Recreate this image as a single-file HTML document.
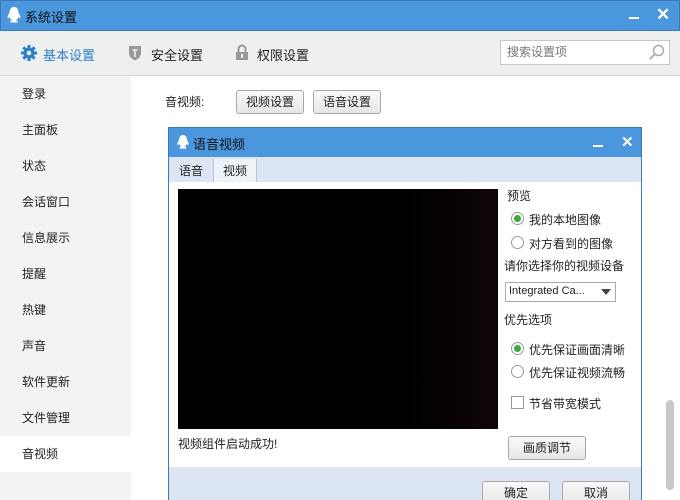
<!DOCTYPE html><html><head><meta charset="utf-8"><style>
*{margin:0;padding:0;box-sizing:border-box}
html,body{width:680px;height:500px;overflow:hidden}
body{font-family:"Liberation Sans","Noto Sans CJK SC",sans-serif;font-size:12px;color:#222;position:relative;background:#fff}
.a{position:absolute}
.btn{position:absolute;border:1px solid #a8a8a8;border-radius:3px;background:linear-gradient(#fafafa,#e6e6e6);text-align:center;font-size:12px}
.rad{position:absolute;width:13px;height:13px;border:1px solid #999;border-radius:50%;background:#fff}
.rad.on::after{content:"";position:absolute;left:2px;top:2px;width:7px;height:7px;border-radius:50%;background:#3daa3d}
</style></head><body>
<div class="a" style="left:0;top:0;width:680px;height:31px;background:#4b97dd;border:1px solid #3a78b8"></div>
<svg class="a" style="left:6px;top:6px" width="16" height="18" viewBox="0 0 16 18"><path d="M8 1C4.5 1 3.5 4 3.5 7 2 9 1 11 2 12.5 3 12 3.5 11.5 4 11c0 1.5 1 3 2 3.5C4 15 3 16 5 16.5h6c2-.5 1-1.5-1-2 1-.5 2-2 2-3.5.5.5 1 1 2 1.5 1-1.5 0-3.5-1.5-5.5C12.5 4 11.5 1 8 1z" fill="#fff"/></svg>
<div class="a" style="left:25px;top:7px;color:#111;font-size:13px">系统设置</div>
<div class="a" style="left:629px;top:17px;width:10px;height:2px;background:#fff"></div>
<div class="a" style="left:656px;top:5px;color:#fff;font-size:17px;font-weight:bold">✕</div>
<div class="a" style="left:0;top:31px;width:680px;height:45px;background:#eef0f0;border-bottom:1px solid #d8d8d8"></div>
<svg class="a" style="left:21px;top:45px" width="16" height="16" viewBox="0 0 16 16"><g fill="#2d7fcb"><circle cx="8" cy="8" r="5.5"/><rect x="6.5" y="0" width="3" height="16"/><rect x="0" y="6.5" width="16" height="3"/><rect x="6.5" y="0" width="3" height="16" transform="rotate(45 8 8)"/><rect x="6.5" y="0" width="3" height="16" transform="rotate(-45 8 8)"/></g><circle cx="8" cy="8" r="2.3" fill="#eef0f0"/></svg>
<div class="a" style="left:43px;top:45px;color:#2d7fcb;font-size:13px">基本设置</div>
<svg class="a" style="left:128px;top:45px" width="14" height="16" viewBox="0 0 14 16"><path d="M1 1h12v7c0 4-3 6-6 7.5C4 14 1 12 1 8z" fill="#999"/><path d="M4 4h6l-2 3v5H6V7z" fill="#ddd"/></svg>
<div class="a" style="left:151px;top:45px;font-size:13px">安全设置</div>
<svg class="a" style="left:235px;top:44px" width="14" height="17" viewBox="0 0 14 17"><path d="M3.5 8V5a3.5 3.5 0 017 0v3" stroke="#999" stroke-width="2" fill="none"/><rect x="1" y="8" width="12" height="8" fill="#999"/><rect x="6" y="10" width="2" height="4" fill="#eee"/></svg>
<div class="a" style="left:257px;top:45px;font-size:13px">权限设置</div>
<div class="a" style="left:500px;top:40px;width:170px;height:25px;background:#fff;border:1px solid #c8c8c8"></div>
<div class="a" style="left:507px;top:43px;color:#777;font-size:12px">搜索设置项</div>
<svg class="a" style="left:648px;top:43px" width="18" height="18" viewBox="0 0 18 18"><circle cx="10.5" cy="7.5" r="5" stroke="#aaa" stroke-width="1.5" fill="none"/><path d="M7 11l-5 5" stroke="#aaa" stroke-width="1.8"/></svg>
<div class="a" style="left:0;top:76px;width:131px;height:424px;background:#f3f3f3"></div>
<div class="a" style="left:0;top:436px;width:131px;height:36px;background:#fff"></div>
<div class="a" style="left:22px;top:76px;line-height:36px;font-size:12px">登录<br>主面板<br>状态<br>会话窗口<br>信息展示<br>提醒<br>热键<br>声音<br>软件更新<br>文件管理<br>音视频</div>
<div class="a" style="left:165px;top:93px">音视频:</div>
<div class="btn" style="left:236px;top:90px;width:68px;height:24px;line-height:22px">视频设置</div>
<div class="btn" style="left:313px;top:90px;width:68px;height:24px;line-height:22px">语音设置</div>
<div class="a" style="left:666px;top:400px;width:8px;height:90px;border-radius:4px;background:#c8c8c8"></div>
<div class="a" style="left:168px;top:127px;width:474px;height:373px;border:1px solid #3a78b8;border-bottom:none;background:#fff"></div>
<div class="a" style="left:169px;top:128px;width:472px;height:29px;background:#4b97dd"></div>
<svg class="a" style="left:176px;top:134px" width="14" height="16" viewBox="0 0 16 18"><path d="M8 1C4.5 1 3.5 4 3.5 7 2 9 1 11 2 12.5 3 12 3.5 11.5 4 11c0 1.5 1 3 2 3.5C4 15 3 16 5 16.5h6c2-.5 1-1.5-1-2 1-.5 2-2 2-3.5.5.5 1 1 2 1.5 1-1.5 0-3.5-1.5-5.5C12.5 4 11.5 1 8 1z" fill="#fff"/></svg>
<div class="a" style="left:193px;top:134px;color:#111;font-size:13px">语音视频</div>
<div class="a" style="left:593px;top:145px;width:10px;height:2px;background:#fff"></div>
<div class="a" style="left:621px;top:133px;color:#fff;font-size:15px;font-weight:bold">✕</div>
<div class="a" style="left:169px;top:157px;width:472px;height:25px;background:#dce6f3"></div>
<div class="a" style="left:179px;top:162px">语音</div>
<div class="a" style="left:213px;top:159px;width:44px;height:23px;background:#eef3fa;border-left:1px solid #b8c4d4;border-right:1px solid #b8c4d4"></div>
<div class="a" style="left:223px;top:162px">视频</div>
<div class="a" style="left:178px;top:189px;width:320px;height:240px;background:linear-gradient(90deg,#000 70%,#080203 88%,#120708)"></div>
<div class="a" style="left:178px;top:435px">视频组件启动成功!</div>
<div class="a" style="left:507px;top:187px">预览</div>
<div class="rad on" style="left:511px;top:212px"></div><div class="a" style="left:529px;top:211px">我的本地图像</div>
<div class="rad" style="left:511px;top:236px"></div><div class="a" style="left:529px;top:235px">对方看到的图像</div>
<div class="a" style="left:504px;top:257px">请你选择你的视频设备</div>
<div class="a" style="left:505px;top:282px;width:111px;height:20px;border:1px solid #aaa;background:#fff"></div>
<div class="a" style="left:509px;top:285px;font-size:11px">Integrated Ca...</div>
<div class="a" style="left:601px;top:289px;border-left:5px solid transparent;border-right:5px solid transparent;border-top:6px solid #444"></div>
<div class="a" style="left:504px;top:311px">优先选项</div>
<div class="rad on" style="left:511px;top:342px"></div><div class="a" style="left:529px;top:341px">优先保证画面清晰</div>
<div class="rad" style="left:511px;top:365px"></div><div class="a" style="left:529px;top:364px">优先保证视频流畅</div>
<div class="a" style="left:511px;top:396px;width:13px;height:13px;border:1px solid #999;background:#fff"></div>
<div class="a" style="left:529px;top:395px">节省带宽模式</div>
<div class="btn" style="left:508px;top:436px;width:78px;height:24px;line-height:22px">画质调节</div>
<div class="a" style="left:169px;top:467px;width:472px;height:33px;background:#dce6f3"></div>
<div class="btn" style="left:482px;top:481px;width:68px;height:24px;line-height:22px">确定</div>
<div class="btn" style="left:562px;top:481px;width:68px;height:24px;line-height:22px">取消</div>
</body></html>
